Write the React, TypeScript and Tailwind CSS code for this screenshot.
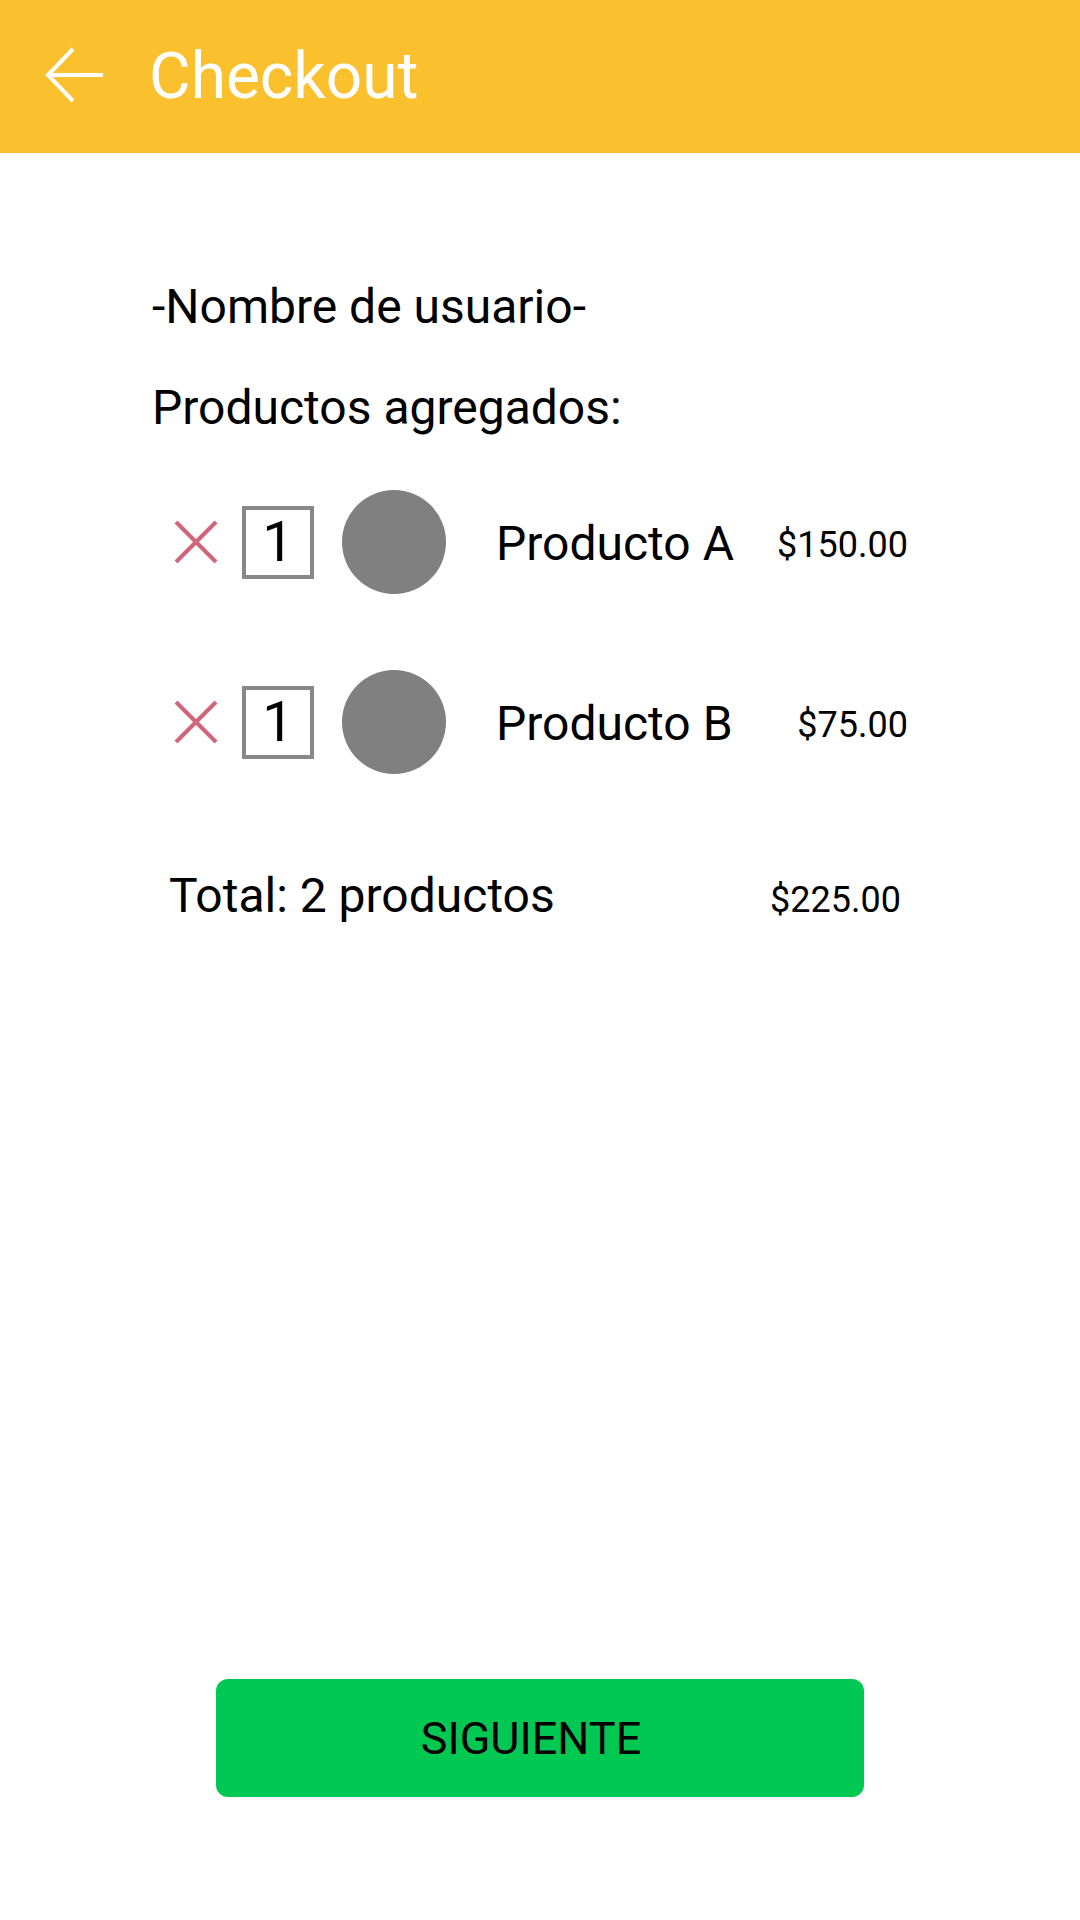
import React from "react";

const font = { fontFamily: "Roboto, 'Noto Sans', sans-serif" };

function XMark() {
  return (
    <svg width="44" height="44" viewBox="0 0 44 44" className="shrink-0">
      <line x1="2" y1="2" x2="42" y2="42" stroke="#CF6679" strokeWidth="4" />
      <line x1="42" y1="2" x2="2" y2="42" stroke="#CF6679" strokeWidth="4" />
    </svg>
  );
}

function ProductRow({ name, price }: { name: string; price: string }) {
  return (
    <div className="flex items-center pl-[174px] pr-[172px] h-[104px]">
      <XMark />
      <div className="ml-[24px] w-[72px] h-[73px] border-[4px] border-[#888888] bg-white flex items-center justify-center shrink-0">
        <span className="text-[56px] leading-[56px] text-black">1</span>
      </div>
      <div className="ml-[28px] w-[104px] h-[104px] rounded-full bg-[#808080] shrink-0" />
      <div className="ml-[50px] mt-[3px] flex-1 flex items-center justify-between">
        <span className="text-[48px] leading-[56px] text-black">{name}</span>
        <span className="pt-[3px] text-[36px] leading-[42px] text-black">{price}</span>
      </div>
    </div>
  );
}

export default function App() {
  return (
    <div className="min-h-screen w-[1080px] bg-white flex flex-col" style={font}>
      <header className="h-[153px] bg-[#FBC02D] flex items-center shrink-0">
        <svg width="64" height="60" viewBox="0 0 64 60" className="ml-[44px] mb-[2px]">
          <line x1="4" y1="29" x2="59" y2="29" stroke="white" strokeWidth="4" />
          <polyline points="29,3 4,29 29,55" fill="none" stroke="white" strokeWidth="4" />
        </svg>
        <h1 className="ml-[41px] text-[64px] leading-[75px] text-white font-normal">Checkout</h1>
      </header>

      <div className="pl-[152px] mt-[126px]">
        <p className="text-[48px] leading-[56px] text-black">-Nombre de usuario-</p>
        <p className="mt-[45px] text-[48px] leading-[56px] text-black">Productos agregados:</p>
      </div>

      <div className="mt-[54px] flex flex-col gap-[76px]">
        <ProductRow name="Producto A" price="$150.00" />
        <ProductRow name="Producto B" price="$75.00" />
      </div>

      <div className="mt-[94px] pl-[169px] pr-[179px] flex items-baseline justify-between">
        <span className="text-[48px] leading-[56px] text-black">Total: 2 productos</span>
        <span className="text-[36px] leading-[42px] text-black">$225.00</span>
      </div>

      <div className="mt-auto pb-[123px] flex justify-center">
        <button className="w-[648px] h-[118px] rounded-[12px] bg-[#00C853] flex items-center justify-center pr-[18px]">
          <span className="text-[45px] leading-[53px] text-black">SIGUIENTE</span>
        </button>
      </div>
    </div>
  );
}
